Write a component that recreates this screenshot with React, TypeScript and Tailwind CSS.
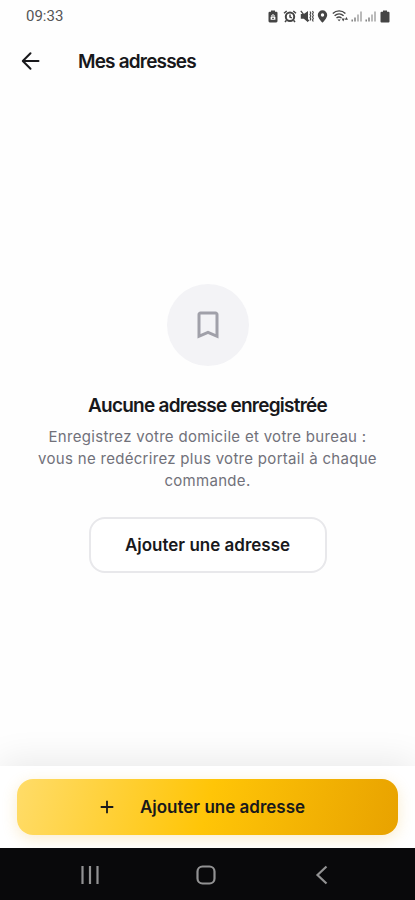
import type { ReactNode } from "react";
import { MdBookmarkBorder } from "react-icons/md";

function StatusIcons() {
  return (
    <div className="flex items-center text-[#444444]">
      <svg width="10" height="13" viewBox="0 0 10 13" className="mr-[5px]">
        <path
          fill="currentColor"
          fillRule="evenodd"
          d="M3 .5h4v1.300h1A1.300 1.300 0 0 1 9.500 3.100v8A1.300 1.300 0 0 1 8.200 12.400H1.800A1.300 1.300 0 0 1 .5 11.100v-8A1.300 1.300 0 0 1 1.800 1.800H3zM5 3.900 2.600 6.300h.9v.8h-.9v2.700h4.800V7.100h-.9v-.8h.9z"
        />
        <path d="M4 8.300h2M5 5.200v1.600" stroke="currentColor" />
      </svg>
      <svg
        width="14"
        height="13"
        viewBox="0 0 14 13"
        fill="none"
        stroke="currentColor"
        className="mr-[3px]"
      >
        <circle cx="7" cy="6.700" r="4.200" strokeWidth="2" />
        <path
          d="M7 4.500v2.600l1.800.8M1 3.300 3.700 1M13 3.300 10.300 1M3.500 10.300 2 12.100M10.500 10.300l1.500 1.800"
          strokeWidth="1.500"
        />
      </svg>
      <svg width="14" height="13" viewBox="0 0 14 13" className="mr-[3px]">
        <path fill="currentColor" d="M.8 4h3L8 .9v11.300L3.800 8.800h-3z" />
        <path d="m.8.9 8 10.200" stroke="currentColor" strokeWidth="1.300" />
        <path
          d="m10 1.500.8 1.500-.8 1.500.8 1.500-.8 1.500.8 1.500-.8 1.500M12.500 1l.8 1.500-.8 1.500.8 1.500-.8 1.500.8 1.500-.8 1.500.8 1.500"
          fill="none"
          stroke="currentColor"
          strokeWidth="1.100"
        />
      </svg>
      <svg width="11" height="13" viewBox="0 0 11 13" className="mr-[4px]">
        <path
          fill="currentColor"
          fillRule="evenodd"
          d="M5.500.3A4.700 4.700 0 0 0 .8 5c0 3.300 4.700 7.700 4.700 7.700S10.200 8.300 10.200 5A4.700 4.700 0 0 0 5.500.3m0 3a1.700 1.700 0 1 1 0 3.400 1.700 1.700 0 0 1 0-3.400"
        />
      </svg>
      <svg
        width="17"
        height="14"
        viewBox="0 0 17 14"
        fill="none"
        stroke="currentColor"
        className="mr-[2px]"
      >
        <path
          d="M.8 4.400c3.600-3.400 9-3.400 12.600 0M2.600 6.700c2.600-2.300 6.400-2.300 9 0M4.500 9c1.500-1.300 3.500-1.300 5 0"
          strokeWidth="1.400"
        />
        <path
          d="M5.500 10.400h3.200l-1.600 1.900zM9.600 9.600l1.600 2.800 1.600-2.800zM12.800 10.800l1.600-2.700 1.600 2.700z"
          fill="currentColor"
          stroke="none"
        />
      </svg>
      <SignalBars />
      <SignalBars />
      <svg width="10" height="13" viewBox="0 0 10 13" className="ml-px">
        <path
          fill="currentColor"
          d="M3 .5h4v1.300h1.500a1 1 0 0 1 1 1v8.600a1 1 0 0 1-1 1h-7a1 1 0 0 1-1-1V2.800a1 1 0 0 1 1-1H3z"
        />
      </svg>
    </div>
  );
}

function SignalBars() {
  return (
    <svg width="12" height="12" viewBox="0 0 12 12" className="mr-[2px]">
      <path d="M1.200 9.500v2M4 7.500v4" stroke="#777777" strokeWidth="1.400" />
      <path d="M7 4.500v7M10 1.500v10" stroke="#a5a5a5" strokeWidth="1.500" />
    </svg>
  );
}

function NavButton({ label, children }: { label: string; children: ReactNode }) {
  return (
    <button aria-label={label} className="flex h-full w-[116px] items-center justify-center">
      <svg
        width="24"
        height="24"
        viewBox="0 0 24 24"
        fill="none"
        stroke="#929293"
        strokeWidth="2.200"
      >
        {children}
      </svg>
    </button>
  );
}

export default function App() {
  return (
    <div className="flex h-[900px] w-[415px] flex-col overflow-hidden bg-[#fefefe] font-['Inter',sans-serif] text-[#18181b]">
      <div className="flex h-8 shrink-0 items-center justify-between pr-[25px] pl-[26px]">
        <span className="font-['Roboto',sans-serif] text-[15px] text-[#555555]">
          09:33
        </span>
        <StatusIcons />
      </div>

      <header className="flex h-[58px] shrink-0 items-center pl-[19px]">
        <button aria-label="Retour">
          <svg
            width="24"
            height="24"
            viewBox="0 0 24 24"
            fill="none"
            stroke="currentColor"
            strokeWidth="2"
            strokeLinecap="round"
            strokeLinejoin="round"
          >
            <path d="M19.500 12H4M11.500 4.300 3.800 12l7.700 7.700" />
          </svg>
        </button>
        <h1 className="ml-[35px] pt-[2px] text-[19px] font-semibold tracking-[-0.82px]">
          Mes adresses
        </h1>
      </header>

      <main className="flex flex-1 flex-col items-center justify-center pt-px">
        <div className="flex h-[82px] w-[82px] items-center justify-center rounded-full bg-[#f3f3f6]">
          <MdBookmarkBorder className="h-9 w-9 text-[#a0a0a9]" />
        </div>
        <h2 className="mt-[26px] text-[19px] leading-[28px] font-semibold tracking-[-0.75px] whitespace-nowrap">
          Aucune adresse enregistrée
        </h2>
        <p className="mt-[6px] text-center text-[15px] leading-[21.800px] tracking-[0.3px] whitespace-nowrap text-[#71717a]">
          Enregistrez votre domicile et votre bureau :
          <br />
          vous ne redécrirez plus votre portail à chaque
          <br />
          commande.
        </p>
        <button className="mt-[25px] h-[56px] w-[238px] rounded-[16px] border-2 border-[#e8e8eb] bg-white pt-[2px] text-[17px] font-semibold">
          Ajouter une adresse
        </button>
      </main>

      <div className="relative z-10 h-[82px] shrink-0 bg-white px-[17px] pt-[13px] shadow-[0_-4px_36px_rgba(0,0,0,0.09)]">
        <button className="flex h-[56px] w-full items-center justify-center rounded-[16px] bg-linear-[105deg,#ffdc69_0%,#ffc507_50%,#e8a200_100%] pr-[15px] text-[17px] font-semibold shadow-[0_4px_16px_rgba(232,162,0,0.2)]">
          <svg
            width="24"
            height="24"
            viewBox="0 0 24 24"
            stroke="currentColor"
            strokeWidth="1.800"
            className="mr-[21px]"
          >
            <path d="M12 5.700v12.600M5.700 12h12.600" />
          </svg>
          <span className="pt-px">Ajouter une adresse</span>
        </button>
      </div>

      <nav className="relative z-20 flex h-[52px] shrink-0 items-center justify-center bg-[#09090b] pt-[2px] pr-[3px]">
        <NavButton label="Applications récentes">
          <path d="M4.500 3v18M12 3v18M19.500 3v18" />
        </NavButton>
        <NavButton label="Accueil">
          <rect x="3.500" y="3.500" width="17" height="17" rx="5" />
        </NavButton>
        <NavButton label="Précédent">
          <path d="m16.500 3.500-9 8.500 9 8.500" />
        </NavButton>
      </nav>
    </div>
  );
}
